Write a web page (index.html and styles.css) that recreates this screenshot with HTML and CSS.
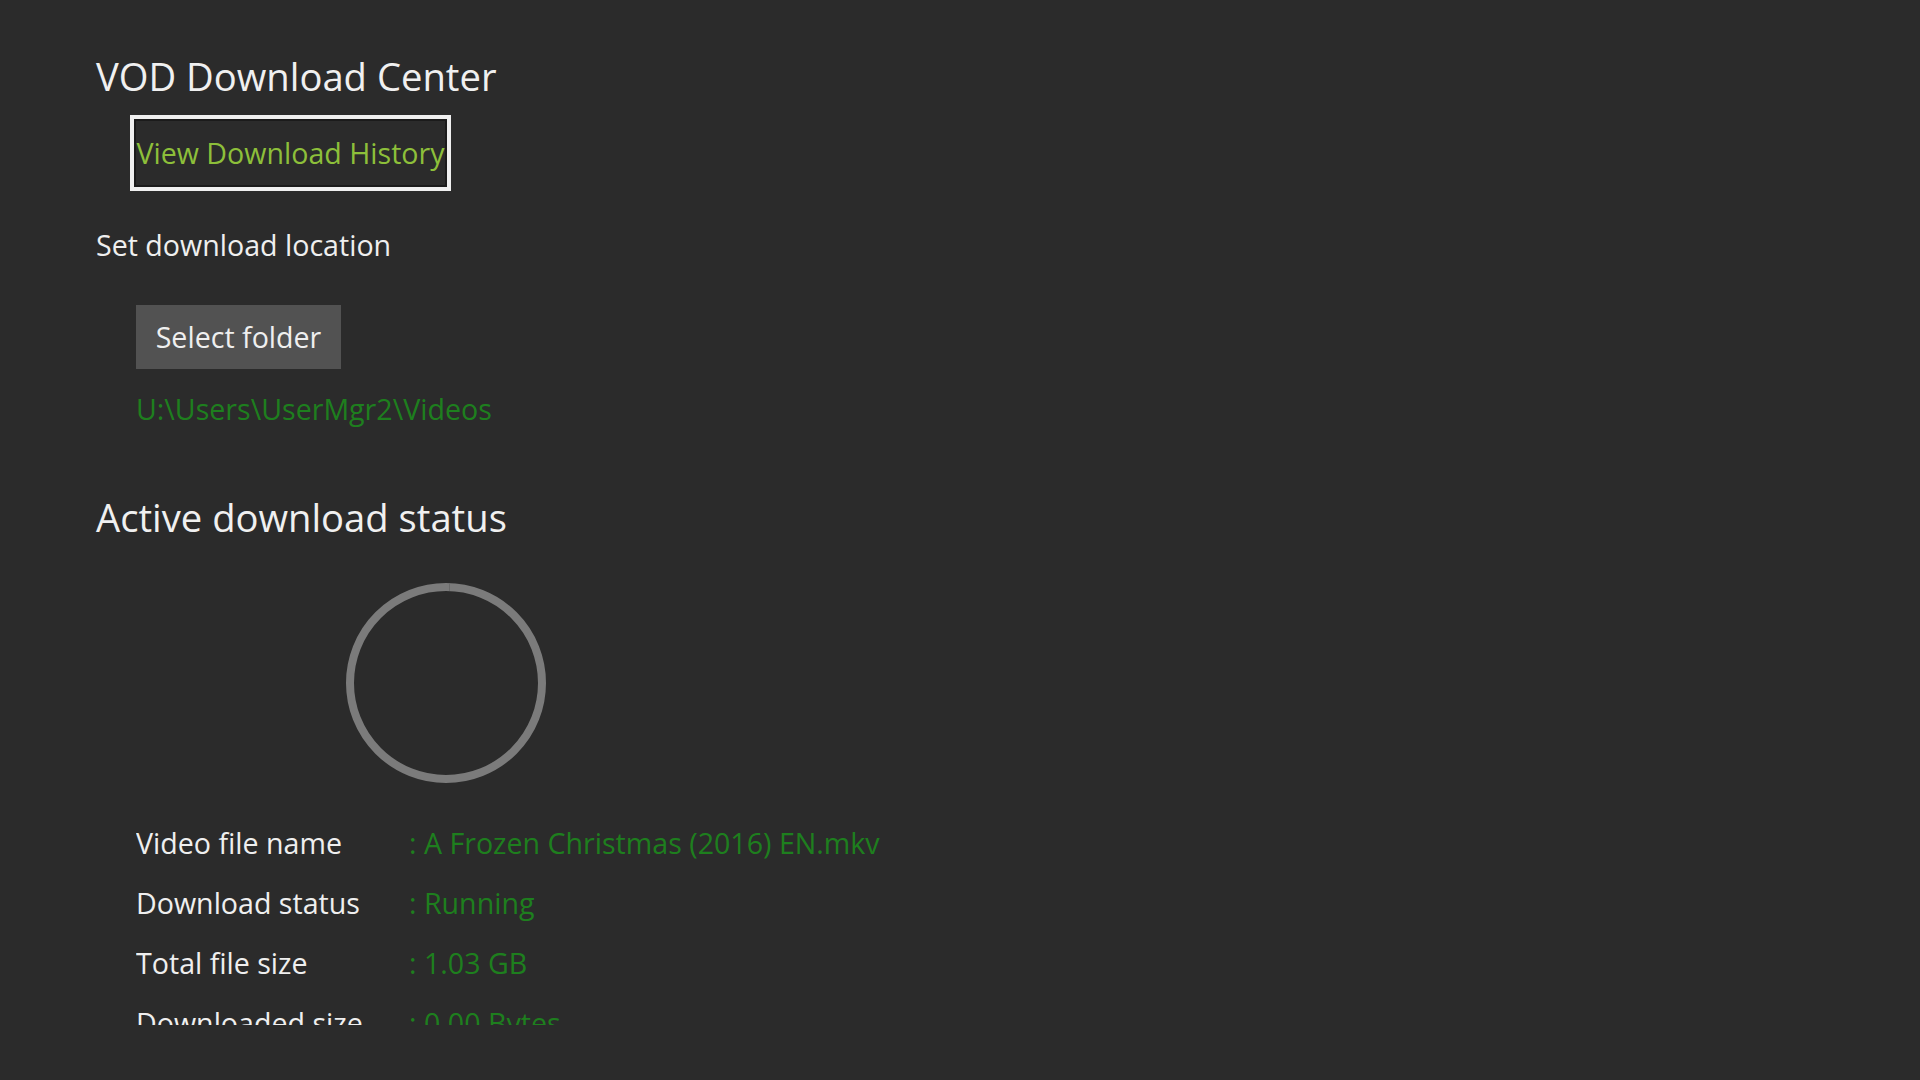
FILE: index.html
```html
<!DOCTYPE html>
<html lang="en">
<head>
<meta charset="UTF-8">
<meta name="viewport" content="width=device-width, initial-scale=1.0">
<title>VOD Download Center</title>
<link rel="stylesheet" href="styles.css">
</head>
<body>

<div class="page">
  <h1 class="title">VOD Download Center</h1>
  <button class="history-btn">View Download History</button>

  <div class="label">Set download location</div>
  <button class="folder-btn">Select folder</button>
  <div class="path">U:\Users\UserMgr2\Videos</div>

  <h2 class="title status-title">Active download status</h2>
  <div class="progress-ring"></div>

  <!-- details of the current download -->
  <div class="details">
    <div class="row"><span class="key">Video file name</span><span class="val">: A Frozen Christmas (2016) EN.mkv</span></div>
    <div class="row"><span class="key">Download status</span><span class="val">: Running</span></div>
    <div class="row"><span class="key">Total file size</span><span class="val">: 1.03 GB</span></div>
    <div class="row"><span class="key">Downloaded size</span><span class="val">: 0.00 Bytes</span></div>
  </div>
</div>

</body>
</html>
```

FILE: styles.css
```css
html, body { margin: 0; padding: 0; background-color: #2b2b2b; }
body { font-family: 'Open Sans', 'Noto Sans', sans-serif; color: #efefef; font-size: 28.6px; line-height: 38px; width: 1920px; height: 1080px; overflow: hidden; }

.page { padding: 50px 0 0 96px; }

.title { font-size: 38.2px; line-height: 52px; font-weight: 400; margin: 0; color: #f0f0f0; }

.history-btn {
  display: block;
  margin: 13px 0 0 34px;
  width: 321px;
  height: 76px;
  padding: 0;
  box-sizing: border-box;
  background: transparent;
  border: 4px solid #f0f0f0;
  box-shadow: inset 0 0 0 2px #1b1b1b;
  font-family: inherit;
  font-size: 28.6px;
  line-height: 38px;
  color: #8dbf3a;
  text-align: center;
  white-space: nowrap;
}

.label { margin-top: 35px; }

.folder-btn {
  display: block;
  margin: 41px 0 0 40px;
  width: 205px;
  height: 64px;
  padding: 0;
  border: none;
  background-color: #525252;
  color: #efefef;
  font-family: inherit;
  font-size: 28.6px;
  line-height: 38px;
  text-align: center;
}

.path { margin: 21px 0 0 40px; color: #1e7f1e; }

.status-title { margin-top: 63px; }

.progress-ring {
  position: relative;
  margin: 40px 0 0 250px;
  width: 200px;
  height: 200px;
  box-sizing: border-box;
  border: 8px solid #7b7b7b;
  border-radius: 50%;
}
.progress-ring::before {
  content: '';
  position: absolute;
  top: -8px;
  left: 95px;
  width: 1px;
  height: 8px;
  background: #6a6a6a;
}

/* last row is cut by the scroll area, as on the console */
.details { margin: 30px 0 0 40px; height: 212px; overflow: hidden; }
.row { display: flex; line-height: 60px; }
.key { width: 273px; flex: none; color: #efefef; }
.val { color: #1e7f1e; white-space: nowrap; }
```
